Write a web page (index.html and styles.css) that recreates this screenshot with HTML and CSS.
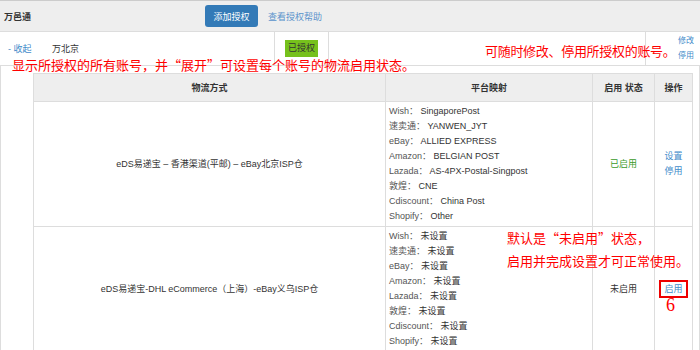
FILE: index.html
```html
<!DOCTYPE html>
<html lang="zh-CN">
<head>
  <meta charset="UTF-8" />
  <title>万邑通 授权账号</title>
  <link rel="stylesheet" href="styles.css">
</head>
<body>
  <div class="panel">
    <div class="panel-head">
      <span class="title">万邑通</span>
      <button class="btn-add">添加授权</button>
      <a class="help">查看授权帮助</a>
    </div>

    <div class="acc-row">
      <div class="acc-main">
        <a class="toggle">- 收起</a>
        <span class="acc-name">万北京</span>
      </div>
      <div class="acc-state"><span class="badge">已授权</span></div>
      <div class="acc-blank"></div>
      <div class="acc-ops">
        <a>修改</a>
        <a>停用</a>
      </div>
    </div>

    <div class="detail">
      <table class="logistics">
        <colgroup>
          <col class="c-way">
          <col class="c-map">
          <col class="c-state">
          <col class="c-ops">
        </colgroup>
        <thead>
          <tr>
            <th>物流方式</th>
            <th>平台映射</th>
            <th>启用 状态</th>
            <th>操作</th>
          </tr>
        </thead>
        <tbody>
          <tr>
            <td class="way">eDS易递宝 – 香港渠道(平邮) – eBay北京ISP仓</td>
            <td class="map">
              <div><span class="k">Wish：</span> SingaporePost</div>
              <div><span class="k">速卖通：</span> YANWEN_JYT</div>
              <div><span class="k">eBay：</span> ALLIED EXPRESS</div>
              <div><span class="k">Amazon：</span> BELGIAN POST</div>
              <div><span class="k">Lazada：</span> AS-4PX-Postal-Singpost</div>
              <div><span class="k">敦煌：</span> CNE</div>
              <div><span class="k">Cdiscount：</span> China Post</div>
              <div><span class="k">Shopify：</span> Other</div>
            </td>
            <td class="state on">已启用</td>
            <td class="ops">
              <a>设置</a>
              <a>停用</a>
            </td>
          </tr>
          <tr>
            <td class="way">eDS易递宝-DHL eCommerce（上海）-eBay义乌ISP仓</td>
            <td class="map">
              <div><span class="k">Wish：</span> 未设置</div>
              <div><span class="k">速卖通：</span> 未设置</div>
              <div><span class="k">eBay：</span> 未设置</div>
              <div><span class="k">Amazon：</span> 未设置</div>
              <div><span class="k">Lazada：</span> 未设置</div>
              <div><span class="k">敦煌：</span> 未设置</div>
              <div><span class="k">Cdiscount：</span> 未设置</div>
              <div><span class="k">Shopify：</span> 未设置</div>
            </td>
            <td class="state">未启用</td>
            <td class="ops">
              <a class="marked">启用</a>
            </td>
          </tr>
        </tbody>
      </table>
    </div>

    <!-- red notes drawn over the screenshot -->
    <div class="note note-list">显示所授权的所有账号，并“展开”可设置每个账号的物流启用状态。</div>
    <div class="note note-edit">可随时修改、停用所授权的账号。</div>
    <div class="note note-default">默认是“未启用”状态，</div>
    <div class="note note-enable">启用并完成设置才可正常使用。</div>
    <div class="note note-num">6</div>
  </div>
</body>
</html>
```

FILE: styles.css
```css
* { box-sizing: border-box; }
body {
  margin: 0;
  font-family: "Liberation Sans", "Noto Sans CJK SC", sans-serif;
  font-size: 9px;
  color: #333;
  background: #fff;
  width: 700px;
  height: 350px;
  overflow: hidden;
}
a { color: #428bca; cursor: pointer; }

.panel {
  position: relative;
  border-top: 1px solid #ccc;
}
.panel-head {
  height: 31px;
  background: #eee;
  border-bottom: 1px solid #ddd;
  display: flex;
  align-items: center;
  padding-left: 4px;
}
.title { font-weight: bold; width: 201px; }
.btn-add {
  background: #337ab7;
  color: #fff;
  border: none;
  border-radius: 3px;
  width: 53px;
  height: 22px;
  padding: 0;
  font-family: inherit;
  font-size: 9px;
}
.help { margin-left: 10px; color: #5a93cc; }

.acc-row {
  display: grid;
  grid-template-columns: 274px 54px 317px 1fr;
  height: 34px;
  border-bottom: 1px solid #ddd;
}
.acc-row > div + div { border-left: 1px solid #ddd; }
.acc-main { display: flex; align-items: center; padding-left: 8px; }
.toggle { width: 44px; }
.acc-state { display: flex; align-items: center; padding-left: 10px; }
.badge {
  background: #76c11c;
  color: #333;
  padding: 0 3px;
  height: 17px;
  line-height: 17px;
}
.acc-ops {
  display: flex;
  flex-direction: column;
  align-items: flex-end;
  padding: 1px 6px 0 0;
  font-size: 8px;
  line-height: 15px;
}

.detail {
  border-left: 1px solid #ddd;
  border-right: 1px solid #ddd;
  padding: 7px 6px 0 32px;
}
.logistics {
  width: 100%;
  border-collapse: collapse;
  table-layout: fixed;
}
.c-way { width: 352px; }
.c-map { width: 207px; }
.c-state { width: 62px; }
.logistics th, .logistics td { border: 1px solid #ddd; }
.logistics th {
  height: 28px;
  background: #eee;
  font-weight: bold;
  text-align: center;
}
.logistics td { padding: 2px 3px; line-height: 15px; }
.way, .state, .ops { text-align: center; }
.state.on { color: #3a9a2a; }
.ops a { display: block; }
.map .k { color: #555; }

.marked {
  display: inline-block !important;
  border: 2px solid #e00;
  padding: 0 3px;
  line-height: 14px;
}

.note {
  position: absolute;
  color: #f00;
  font-family: "Noto Sans CJK SC", sans-serif;
  font-size: 13px;
  line-height: 16px;
  white-space: nowrap;
}
.note-list { left: 12px; top: 56px; }
.note-edit { left: 485px; top: 42px; letter-spacing: -0.3px; }
.note-default { left: 507px; top: 229px; }
.note-enable { left: 507px; top: 252px; }
.note-num {
  left: 666px;
  top: 296px;
  font-family: "Liberation Serif", serif;
  font-size: 18px;
}
```
